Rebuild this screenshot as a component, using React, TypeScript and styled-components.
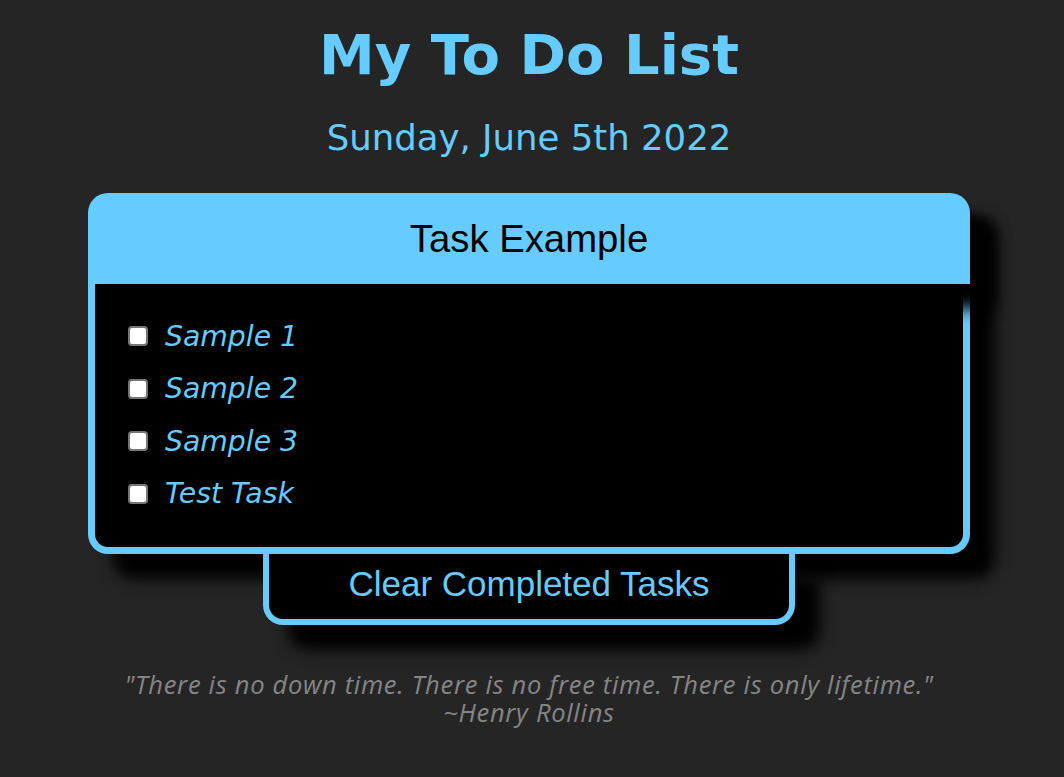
import React from "react";
import styled, { createGlobalStyle } from "styled-components";

const Global = createGlobalStyle`
  html, body { margin: 0; padding: 0; background: #252525; }
  body { font-family: "DejaVu Sans", Verdana, sans-serif; }
`;

const Page = styled.div`
  display: flex;
  flex-direction: column;
  align-items: center;
  padding: 0 6px 40px 0;
  min-height: 777px;
  box-sizing: border-box;
`;

const Title = styled.h1`
  margin: 22px 0 0;
  font-family: "DejaVu Sans", Verdana, sans-serif;
  font-weight: bold;
  font-size: 56px;
  line-height: 66px;
  color: #66ccff;
`;

const DateLine = styled.h2`
  margin: 28px 0 0;
  font-family: "DejaVu Sans", Verdana, sans-serif;
  font-weight: normal;
  font-size: 35.5px;
  line-height: 44px;
  color: #66ccff;
`;

const Card = styled.section`
  margin-top: 33px;
  width: 882px;
  display: flex;
  flex-direction: column;
  border-radius: 20px;
  box-shadow: 25px 25px 15px #000;
`;

const CardHeader = styled.div`
  position: relative;
  z-index: 1;
  height: 91px;
  display: flex;
  align-items: center;
  justify-content: center;
  background: #66ccff;
  border-radius: 20px 20px 0 0;
  box-shadow: 25px 25px 15px #000;
  font-family: "Liberation Sans", Arial, sans-serif;
  font-size: 38.3px;
  color: #000;
`;

const CardBody = styled.ul`
  list-style: none;
  margin: 0;
  padding: 26px 33px 27px;
  background: #000;
  border: 7px solid #66ccff;
  border-top: none;
  border-radius: 0 0 20px 20px;
`;

const Item = styled.li`
  display: flex;
  align-items: center;
  gap: 17px;
  height: 52.5px;
`;

const Check = styled.input`
  appearance: none;
  box-sizing: border-box;
  width: 20px;
  height: 20px;
  margin: 0;
  background: #fff;
  border: 2px solid #767676;
  border-radius: 4px;
  cursor: pointer;
  &:checked {
    background: #66ccff;
    border-color: #66ccff;
  }
`;

const ItemText = styled.span`
  font-family: "DejaVu Sans", Verdana, sans-serif;
  font-style: italic;
  font-size: 28.3px;
  color: #66ccff;
`;

const ClearButton = styled.button`
  width: 532px;
  height: 71px;
  margin: 0;
  padding: 0 0 6px;
  background: #000;
  border: 6px solid #66ccff;
  border-top: none;
  border-radius: 0 0 20px 20px;
  box-shadow: 25px 25px 15px #000;
  font-family: "Liberation Sans", Arial, sans-serif;
  font-size: 35px;
  color: #66ccff;
  cursor: pointer;
`;

const Quote = styled.blockquote`
  margin: 45px 0 0;
  display: flex;
  flex-direction: column;
  align-items: center;
  font-family: "Open Sans", sans-serif;
  font-style: italic;
  font-size: 25.5px;
  letter-spacing: 0.7px;
  color: #858585;
`;

const QuoteLine = styled.span`
  display: block;
  line-height: 28px;
`;

const tasks = ["Sample 1", "Sample 2", "Sample 3", "Test Task"];

export default function App() {
  return (
    <>
      <Global />
      <Page>
        <Title>My To Do List</Title>
        <DateLine>Sunday, June 5th 2022</DateLine>
        <Card>
          <CardHeader>Task Example</CardHeader>
          <CardBody>
            {tasks.map((t) => (
              <Item key={t}>
                <Check type="checkbox" />
                <ItemText>{t}</ItemText>
              </Item>
            ))}
          </CardBody>
        </Card>
        <ClearButton>Clear Completed Tasks</ClearButton>
        <Quote>
          <QuoteLine>
            "There is no down time. There is no free time. There is only lifetime."
          </QuoteLine>
          <QuoteLine>~Henry Rollins</QuoteLine>
        </Quote>
      </Page>
    </>
  );
}
